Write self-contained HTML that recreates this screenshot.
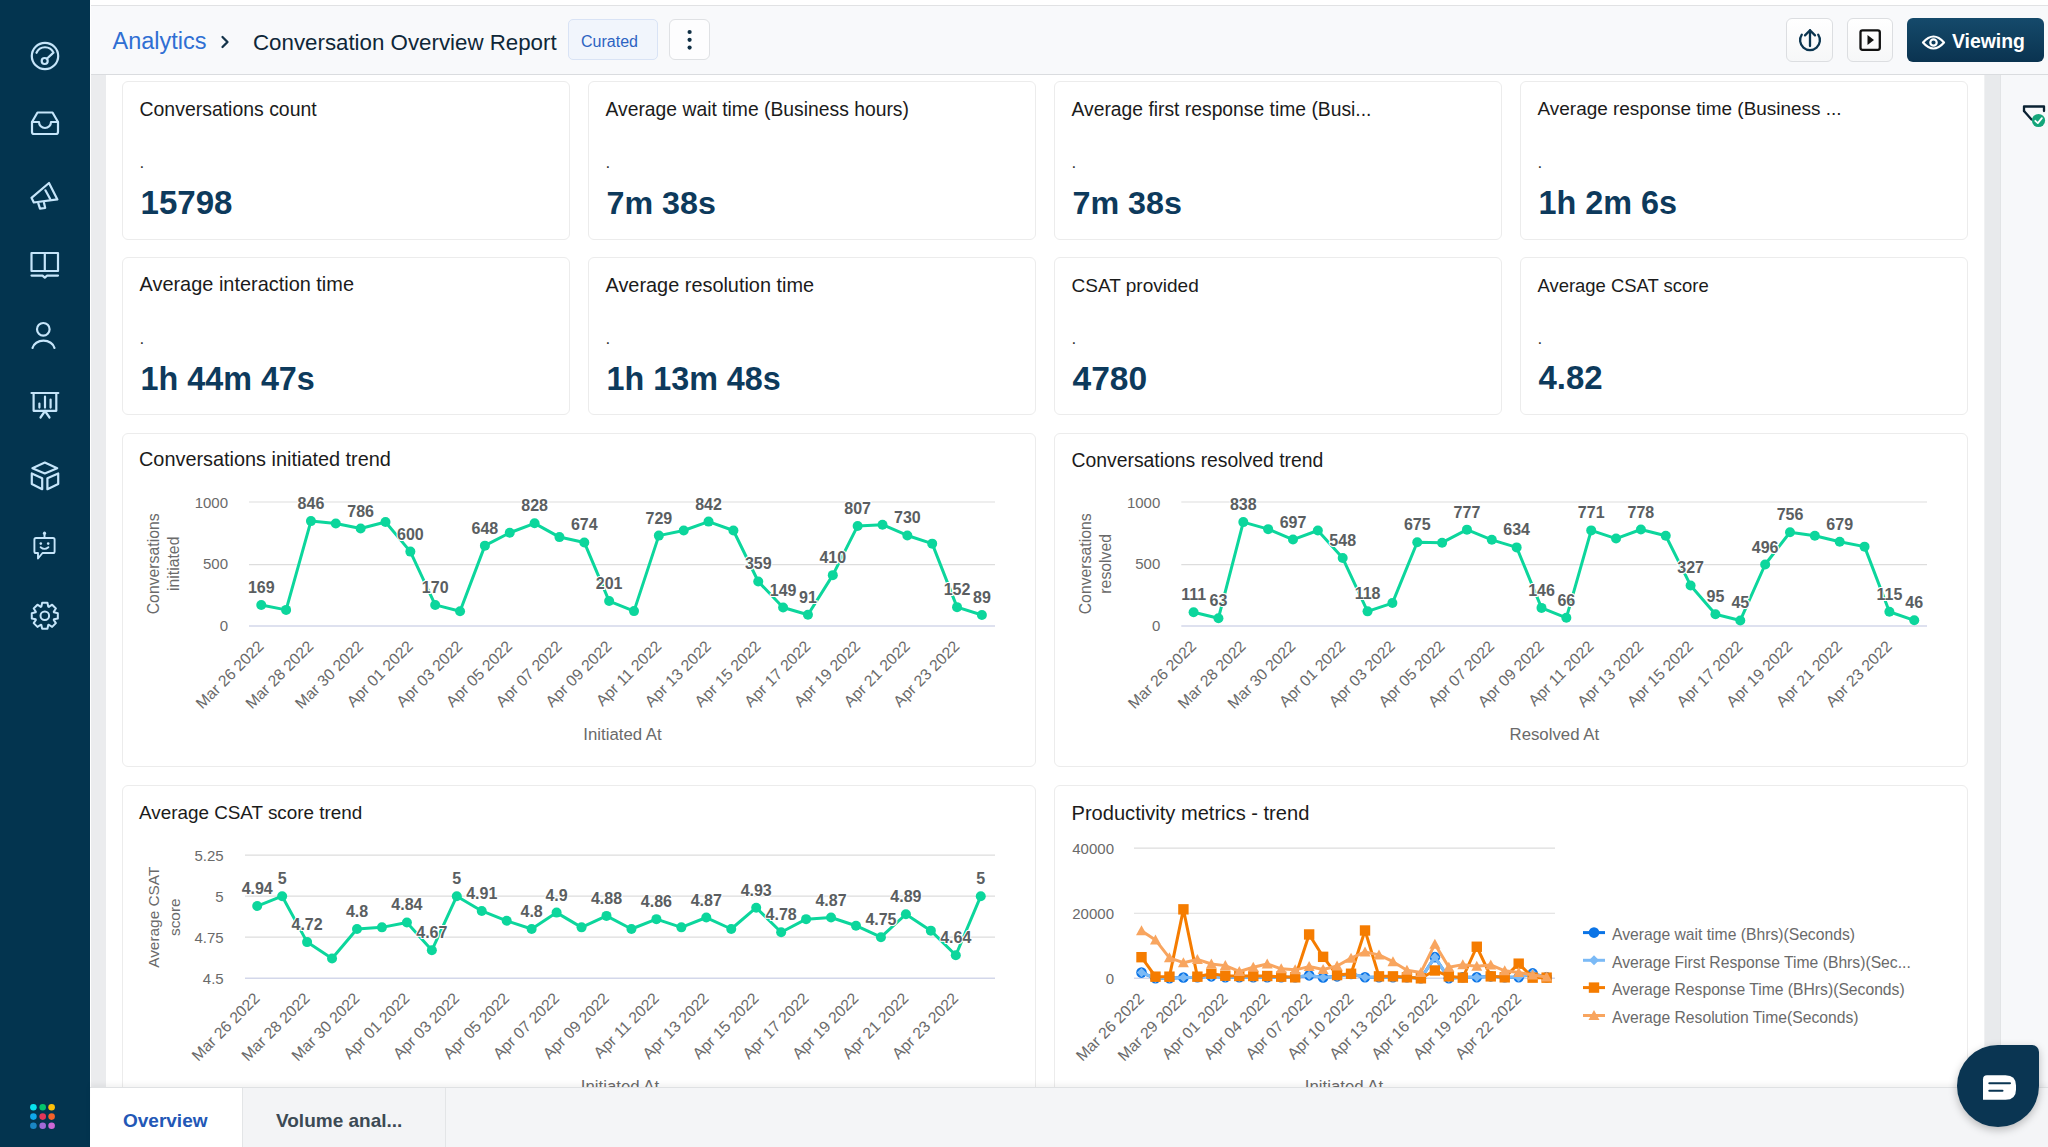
<!DOCTYPE html><html><head><meta charset="utf-8"><title>Conversation Overview Report</title><style>

*{box-sizing:border-box;margin:0;padding:0}
html,body{width:2048px;height:1147px;overflow:hidden;background:#ffffff;font-family:"Liberation Sans",sans-serif;position:relative}
.a{position:absolute}
#sidebar{left:0;top:0;width:90px;height:1147px;background:#03344f}
#topwhite{left:90px;top:0;width:1958px;height:6px;background:#ffffff}
#header{left:91px;top:5px;width:1957px;height:70px;background:#f8f9fb;border-top:1px solid #e1e2e4;border-bottom:1px solid #dadcdf}
.crumb{font-size:23px;color:#2f6fd3;white-space:nowrap;line-height:1}
.title{font-size:22.3px;color:#0f2738;white-space:nowrap;line-height:1}
.badge{left:568px;top:19px;width:90px;height:41px;border:1px solid #d9e3f5;background:#f1f5fc;border-radius:5px}
.badge span{position:absolute;left:12px;top:14px;font-size:16px;color:#2d63c2;line-height:1;white-space:nowrap}
.btn{top:18px;height:44px;border:1px solid #dcdee1;background:linear-gradient(#ffffff,#f6f7f8);border-radius:6px}
#viewing{left:1907px;top:18px;width:137px;height:44px;border-radius:6px;background:linear-gradient(#154a6b,#0a3350)}
#viewing span{position:absolute;left:45px;top:13.5px;font-size:19.4px;font-weight:bold;color:#fff;line-height:1;white-space:nowrap}
#lstrip{left:91px;top:75px;width:15px;height:1013px;background:#ebecee}
#rstrip{left:1984px;top:75px;width:17px;height:1013px;background:#e8eaec;border-left:1px solid #f0f1f2;border-right:1px solid #e2e4e6}
#rpanel{left:2001px;top:75px;width:47px;height:1013px;background:#f7f8fa}
.card{background:#fff;border:1px solid #ececec;border-radius:6px}
.ktitle{font-size:19.5px;color:#1b1b1b;white-space:nowrap;line-height:1}
.kdot{font-size:14px;color:#333;line-height:1}
.kval{font-size:32.6px;font-weight:bold;color:#0d3a5c;white-space:nowrap;line-height:1}
#tabs{left:90px;top:1087px;width:1958px;height:60px;background:#f4f5f7;border-top:1px solid #dfe1e3;box-shadow:0 -3px 5px rgba(0,0,0,0.05)}
#tab1{left:90px;top:1088px;width:152px;height:59px;background:#ffffff}
#tab2{left:242px;top:1088px;width:204px;height:59px;background:#f3f4f6;border-left:1px solid #e3e5e7;border-right:1px solid #e3e5e7}
.tabt{font-size:19px;font-weight:bold;white-space:nowrap;line-height:1}

</style></head><body>
<div id="sidebar" class="a"><svg width="90" height="1147" viewBox="0 0 90 1147" style="position:absolute;left:0;top:0"><g fill="none" stroke="#c6e5fa" stroke-width="2.2" stroke-linecap="round" stroke-linejoin="round"><circle cx="45" cy="56" r="13.2"/><path d="M36.5,52.8 A9.3,9.3 0 0 1 53.5,52.8"/><circle cx="44.7" cy="61" r="3"/><path d="M46.8,58.8 L52.4,53.6"/><path d="M37.5,112.5 L52.5,112.5 L58,122 L58,132 Q58,134 56,134 L34,134 Q32,134 32,132 L32,122 Z"/><path d="M32,122 L39,122 A6,6 0 0 0 51,122 L58,122"/><path d="M31.5,197.8 L49,183 L57.4,199.4 L33.8,202.5 Z"/><path d="M45.4,190.3 L50.2,199"/><path d="M38.3,203.3 L40,208.6 L45.2,208 L44,202.8"/><path d="M31.5,253 L44.8,253 L44.8,271 L31.5,271 Z"/><path d="M44.8,253 L58,253 L58,271 L44.8,271"/><path d="M31.5,275.6 L42.5,275.6 L44.8,277.6 L47.1,275.6 L58,275.6"/><circle cx="43.3" cy="329.3" r="6.3"/><path d="M32.5,348 A11.2,9 0 0 1 54.5,348"/><path d="M31.5,393 L58.3,393"/><path d="M33.6,393 L33.6,410.8 L56.3,410.8 L56.3,393"/><path d="M39.4,403.5 L39.4,407.6 M45,396.5 L45,407.6 M50.6,399.5 L50.6,407.6"/><path d="M45,411 L40.5,417.5 M45,411 L49.5,417.5"/><path d="M44.8,462.6 L57.2,468.2 L44.8,473.4 L32.4,468.2 Z"/><path d="M31.8,473.4 L42.2,478.2 L42.2,489.2 L31.8,484 Z"/><path d="M47.4,478.2 L58.2,473.4 L58.2,484 L47.4,489.2 Z"/><path d="M36,538 L53,538 Q54.6,538 54.6,539.6 L54.6,551.4 Q54.6,553 53,553 L42.5,553 L38,558.5 L38,553 L36,553 Q34.4,553 34.4,551.4 L34.4,539.6 Q34.4,538 36,538 Z" stroke-width="1.9"/><path d="M44.5,538 L44.5,534.5" stroke-width="1.9"/><path d="M40.6,547.2 Q44.5,550.6 48.4,547.2" stroke-width="1.8"/></g><g fill="#c6e5fa"><circle cx="44.5" cy="533.2" r="1.6"/><circle cx="40.8" cy="543.6" r="1.3"/><circle cx="48.2" cy="543.6" r="1.3"/></g><path d="M57.83,613.16 L57.83,618.44 L53.97,619.25 L53.73,619.84 L55.89,623.15 L52.15,626.89 L48.84,624.73 L48.25,624.97 L47.44,628.83 L42.16,628.83 L41.35,624.97 L40.76,624.73 L37.45,626.89 L33.71,623.15 L35.87,619.84 L35.63,619.25 L31.77,618.44 L31.77,613.16 L35.63,612.35 L35.87,611.76 L33.71,608.45 L37.45,604.71 L40.76,606.87 L41.35,606.63 L42.16,602.77 L47.44,602.77 L48.25,606.63 L48.84,606.87 L52.15,604.71 L55.89,608.45 L53.73,611.76 L53.97,612.35 Z" fill="none" stroke="#c6e5fa" stroke-width="2" stroke-linejoin="round"/><circle cx="44.8" cy="615.8" r="4.3" fill="none" stroke="#c6e5fa" stroke-width="2"/><circle cx="33.4" cy="1107.2" r="3.3" fill="#08e3ef"/><circle cx="42.7" cy="1107.2" r="3.3" fill="#06c46c"/><circle cx="51.6" cy="1107.2" r="3.3" fill="#fcc00a"/><circle cx="33.4" cy="1116.6" r="3.3" fill="#10a8ec"/><circle cx="42.7" cy="1116.6" r="3.3" fill="#e43659"/><circle cx="51.6" cy="1116.6" r="3.3" fill="#f4622a"/><circle cx="33.4" cy="1125.7" r="3.3" fill="#1a86c4"/><circle cx="42.7" cy="1125.7" r="3.3" fill="#a06ad6"/><circle cx="51.6" cy="1125.7" r="3.3" fill="#cc68d6"/></svg></div>
<div id="topwhite" class="a"></div>
<div id="header" class="a"></div>
<div class="a crumb" style="left:112.5px;top:30.3px;font-size:23.5px;">Analytics</div>
<div class="a title" style="left:253.0px;top:31.6px;font-size:22.3px;">Conversation Overview Report</div>
<div class="a badge"><span>Curated</span></div>
<div id="viewing" class="a"><span>Viewing</span></div>
<div class="a" style="left:669px;top:19px;width:41px;height:41px;border:1px solid #dfe1e4;background:#fdfdfe;border-radius:6px"></div><svg class="a" style="left:0;top:0" width="2048" height="75" viewBox="0 0 2048 75"><g fill="#0f2f45"><circle cx="689.6" cy="32" r="2.1"/><circle cx="689.6" cy="39.8" r="2.1"/><circle cx="689.6" cy="47.6" r="2.1"/></g><path d="M222.5,37 L227.5,42 L222.5,47" fill="none" stroke="#14334a" stroke-width="2.3" stroke-linecap="round" stroke-linejoin="round"/></svg><div class="a btn" style="left:1786px;width:47px"></div><div class="a btn" style="left:1847px;width:46px"></div><svg class="a" style="left:1770px;top:0" width="278" height="75" viewBox="1770 0 278 75"><path d="M1801.8,34.66 A9.9,9.9 0 1 0 1818.2,34.66" fill="none" stroke="#0b3550" stroke-width="2.3" stroke-linecap="round"/><path d="M1810,46 L1810,30.2 M1805,35.4 L1810,30.2 L1815,35.4" fill="none" stroke="#0b3550" stroke-width="2.3" stroke-linecap="round" stroke-linejoin="round"/><rect x="1860.5" y="30.3" width="19.3" height="19.5" rx="2" fill="none" stroke="#111" stroke-width="2.3"/><path d="M1867.5,35 L1874,40 L1867.5,45 Z" fill="#111"/><path d="M1923,42.5 Q1933.5,30.5 1944,42.5 Q1933.5,54.5 1923,42.5 Z" fill="none" stroke="#fff" stroke-width="2.2" stroke-linejoin="round"/><circle cx="1933.5" cy="42.5" r="3.2" fill="none" stroke="#fff" stroke-width="2.2"/></svg>
<div id="lstrip" class="a"></div>
<div id="rstrip" class="a"></div>
<div id="rpanel" class="a"></div>
<div class="a card" style="left:122px;top:81px;width:448px;height:159px"></div>
<div class="a ktitle" style="left:139.5px;top:99.8px;font-size:19.44px;">Conversations count</div>
<div class="a kdot" style="left:139.5px;top:154.1px;font-size:17px;">.</div>
<div class="a kval" style="left:140.5px;top:186.3px;font-size:33.09px;">15798</div>
<div class="a card" style="left:588px;top:81px;width:448px;height:159px"></div>
<div class="a ktitle" style="left:605.5px;top:99.9px;font-size:19.32px;">Average wait time (Business hours)</div>
<div class="a kdot" style="left:605.5px;top:154.1px;font-size:17px;">.</div>
<div class="a kval" style="left:606.5px;top:187.0px;font-size:32.24px;">7m 38s</div>
<div class="a card" style="left:1054px;top:81px;width:448px;height:159px"></div>
<div class="a ktitle" style="left:1071.5px;top:100.0px;font-size:19.31px;">Average first response time (Busi...</div>
<div class="a kdot" style="left:1071.5px;top:154.1px;font-size:17px;">.</div>
<div class="a kval" style="left:1072.5px;top:187.0px;font-size:32.27px;">7m 38s</div>
<div class="a card" style="left:1520px;top:81px;width:448px;height:159px"></div>
<div class="a ktitle" style="left:1537.5px;top:100.2px;font-size:18.97px;">Average response time (Business ...</div>
<div class="a kdot" style="left:1537.5px;top:154.1px;font-size:17px;">.</div>
<div class="a kval" style="left:1538.5px;top:186.9px;font-size:32.38px;">1h 2m 6s</div>
<div class="a card" style="left:122px;top:257px;width:448px;height:158px"></div>
<div class="a ktitle" style="left:139.5px;top:275.4px;font-size:19.93px;">Average interaction time</div>
<div class="a kdot" style="left:139.5px;top:330.1px;font-size:17px;">.</div>
<div class="a kval" style="left:140.5px;top:362.9px;font-size:32.34px;">1h 44m 47s</div>
<div class="a card" style="left:588px;top:257px;width:448px;height:158px"></div>
<div class="a ktitle" style="left:605.5px;top:275.5px;font-size:19.9px;">Average resolution time</div>
<div class="a kdot" style="left:605.5px;top:330.1px;font-size:17px;">.</div>
<div class="a kval" style="left:606.5px;top:362.9px;font-size:32.32px;">1h 13m 48s</div>
<div class="a card" style="left:1054px;top:257px;width:448px;height:158px"></div>
<div class="a ktitle" style="left:1071.5px;top:276.2px;font-size:19.04px;">CSAT provided</div>
<div class="a kdot" style="left:1071.5px;top:330.1px;font-size:17px;">.</div>
<div class="a kval" style="left:1072.5px;top:361.9px;font-size:33.56px;">4780</div>
<div class="a card" style="left:1520px;top:257px;width:448px;height:158px"></div>
<div class="a ktitle" style="left:1537.5px;top:276.7px;font-size:18.46px;">Average CSAT score</div>
<div class="a kdot" style="left:1537.5px;top:330.1px;font-size:17px;">.</div>
<div class="a kval" style="left:1538.5px;top:362.4px;font-size:32.97px;">4.82</div>
<div class="a card" style="left:122px;top:433px;width:914px;height:334px"></div>
<div class="a card" style="left:1054px;top:433px;width:914px;height:334px"></div>
<div class="a card" style="left:122px;top:785px;width:914px;height:400px"></div>
<div class="a card" style="left:1054px;top:785px;width:914px;height:400px"></div>
<div class="a ktitle" style="left:139.0px;top:450.2px;font-size:19.89px;">Conversations initiated trend</div>
<div class="a ktitle" style="left:1071.5px;top:450.6px;font-size:19.37px;">Conversations resolved trend</div>
<div class="a ktitle" style="left:139.0px;top:804.3px;font-size:18.88px;">Average CSAT score trend</div>
<div class="a ktitle" style="left:1071.5px;top:803.3px;font-size:20.1px;">Productivity metrics - trend</div>
<svg class="a" style="left:0;top:0" width="2048" height="1147" viewBox="0 0 2048 1147" font-family="Liberation Sans, sans-serif"><path d="M249,502.00 L995,502.00" stroke="#dddddd" stroke-width="1.2"/><path d="M249,564.60 L995,564.60" stroke="#dddddd" stroke-width="1.2"/><path d="M249,626.00 L995,626.00" stroke="#d3d7ea" stroke-width="1.6"/><text x="228" y="507.70" text-anchor="end" font-size="15" fill="#6a6a6a">1000</text><text x="228" y="568.80" text-anchor="end" font-size="15" fill="#6a6a6a">500</text><text x="228" y="630.60" text-anchor="end" font-size="15" fill="#6a6a6a">0</text><text x="159.00" y="563.80" text-anchor="middle" transform="rotate(-90 159.00 563.80)" font-size="15.8" fill="#6a6a6a">Conversations</text><text x="179.30" y="563.80" text-anchor="middle" transform="rotate(-90 179.30 563.80)" font-size="15.8" fill="#6a6a6a">initiated</text><path d="M261.25,605.04 L286.10,609.88 L310.95,521.10 L335.80,523.45 L360.65,528.54 L385.50,521.96 L410.35,551.60 L435.20,604.92 L460.05,611.24 L484.90,545.65 L509.75,532.75 L534.60,523.33 L559.45,537.09 L584.30,542.42 L609.15,601.08 L634.00,611.12 L658.85,535.60 L683.70,530.52 L708.55,521.59 L733.40,530.52 L758.25,581.48 L783.10,607.52 L807.95,614.72 L832.80,575.16 L857.65,525.93 L882.50,524.69 L907.35,535.48 L932.20,543.66 L957.05,607.15 L981.90,614.96" fill="none" stroke="#0cd69c" stroke-width="3" stroke-linejoin="round" stroke-linecap="round"/><circle cx="261.25" cy="605.04" r="5" fill="#0cd69c"/><circle cx="286.10" cy="609.88" r="5" fill="#0cd69c"/><circle cx="310.95" cy="521.10" r="5" fill="#0cd69c"/><circle cx="335.80" cy="523.45" r="5" fill="#0cd69c"/><circle cx="360.65" cy="528.54" r="5" fill="#0cd69c"/><circle cx="385.50" cy="521.96" r="5" fill="#0cd69c"/><circle cx="410.35" cy="551.60" r="5" fill="#0cd69c"/><circle cx="435.20" cy="604.92" r="5" fill="#0cd69c"/><circle cx="460.05" cy="611.24" r="5" fill="#0cd69c"/><circle cx="484.90" cy="545.65" r="5" fill="#0cd69c"/><circle cx="509.75" cy="532.75" r="5" fill="#0cd69c"/><circle cx="534.60" cy="523.33" r="5" fill="#0cd69c"/><circle cx="559.45" cy="537.09" r="5" fill="#0cd69c"/><circle cx="584.30" cy="542.42" r="5" fill="#0cd69c"/><circle cx="609.15" cy="601.08" r="5" fill="#0cd69c"/><circle cx="634.00" cy="611.12" r="5" fill="#0cd69c"/><circle cx="658.85" cy="535.60" r="5" fill="#0cd69c"/><circle cx="683.70" cy="530.52" r="5" fill="#0cd69c"/><circle cx="708.55" cy="521.59" r="5" fill="#0cd69c"/><circle cx="733.40" cy="530.52" r="5" fill="#0cd69c"/><circle cx="758.25" cy="581.48" r="5" fill="#0cd69c"/><circle cx="783.10" cy="607.52" r="5" fill="#0cd69c"/><circle cx="807.95" cy="614.72" r="5" fill="#0cd69c"/><circle cx="832.80" cy="575.16" r="5" fill="#0cd69c"/><circle cx="857.65" cy="525.93" r="5" fill="#0cd69c"/><circle cx="882.50" cy="524.69" r="5" fill="#0cd69c"/><circle cx="907.35" cy="535.48" r="5" fill="#0cd69c"/><circle cx="932.20" cy="543.66" r="5" fill="#0cd69c"/><circle cx="957.05" cy="607.15" r="5" fill="#0cd69c"/><circle cx="981.90" cy="614.96" r="5" fill="#0cd69c"/><text x="261.25" y="593.04" text-anchor="middle" font-size="16" font-weight="bold" fill="#5a5e61" stroke="#ffffff" stroke-width="2.2" paint-order="stroke" stroke-linejoin="round">169</text><text x="310.95" y="509.10" text-anchor="middle" font-size="16" font-weight="bold" fill="#5a5e61" stroke="#ffffff" stroke-width="2.2" paint-order="stroke" stroke-linejoin="round">846</text><text x="360.65" y="516.54" text-anchor="middle" font-size="16" font-weight="bold" fill="#5a5e61" stroke="#ffffff" stroke-width="2.2" paint-order="stroke" stroke-linejoin="round">786</text><text x="410.35" y="539.60" text-anchor="middle" font-size="16" font-weight="bold" fill="#5a5e61" stroke="#ffffff" stroke-width="2.2" paint-order="stroke" stroke-linejoin="round">600</text><text x="435.20" y="592.92" text-anchor="middle" font-size="16" font-weight="bold" fill="#5a5e61" stroke="#ffffff" stroke-width="2.2" paint-order="stroke" stroke-linejoin="round">170</text><text x="484.90" y="533.65" text-anchor="middle" font-size="16" font-weight="bold" fill="#5a5e61" stroke="#ffffff" stroke-width="2.2" paint-order="stroke" stroke-linejoin="round">648</text><text x="534.60" y="511.33" text-anchor="middle" font-size="16" font-weight="bold" fill="#5a5e61" stroke="#ffffff" stroke-width="2.2" paint-order="stroke" stroke-linejoin="round">828</text><text x="584.30" y="530.42" text-anchor="middle" font-size="16" font-weight="bold" fill="#5a5e61" stroke="#ffffff" stroke-width="2.2" paint-order="stroke" stroke-linejoin="round">674</text><text x="609.15" y="589.08" text-anchor="middle" font-size="16" font-weight="bold" fill="#5a5e61" stroke="#ffffff" stroke-width="2.2" paint-order="stroke" stroke-linejoin="round">201</text><text x="658.85" y="523.60" text-anchor="middle" font-size="16" font-weight="bold" fill="#5a5e61" stroke="#ffffff" stroke-width="2.2" paint-order="stroke" stroke-linejoin="round">729</text><text x="708.55" y="509.59" text-anchor="middle" font-size="16" font-weight="bold" fill="#5a5e61" stroke="#ffffff" stroke-width="2.2" paint-order="stroke" stroke-linejoin="round">842</text><text x="758.25" y="569.48" text-anchor="middle" font-size="16" font-weight="bold" fill="#5a5e61" stroke="#ffffff" stroke-width="2.2" paint-order="stroke" stroke-linejoin="round">359</text><text x="783.10" y="595.52" text-anchor="middle" font-size="16" font-weight="bold" fill="#5a5e61" stroke="#ffffff" stroke-width="2.2" paint-order="stroke" stroke-linejoin="round">149</text><text x="807.95" y="602.72" text-anchor="middle" font-size="16" font-weight="bold" fill="#5a5e61" stroke="#ffffff" stroke-width="2.2" paint-order="stroke" stroke-linejoin="round">91</text><text x="832.80" y="563.16" text-anchor="middle" font-size="16" font-weight="bold" fill="#5a5e61" stroke="#ffffff" stroke-width="2.2" paint-order="stroke" stroke-linejoin="round">410</text><text x="857.65" y="513.93" text-anchor="middle" font-size="16" font-weight="bold" fill="#5a5e61" stroke="#ffffff" stroke-width="2.2" paint-order="stroke" stroke-linejoin="round">807</text><text x="907.35" y="523.48" text-anchor="middle" font-size="16" font-weight="bold" fill="#5a5e61" stroke="#ffffff" stroke-width="2.2" paint-order="stroke" stroke-linejoin="round">730</text><text x="957.05" y="595.15" text-anchor="middle" font-size="16" font-weight="bold" fill="#5a5e61" stroke="#ffffff" stroke-width="2.2" paint-order="stroke" stroke-linejoin="round">152</text><text x="981.90" y="602.96" text-anchor="middle" font-size="16" font-weight="bold" fill="#5a5e61" stroke="#ffffff" stroke-width="2.2" paint-order="stroke" stroke-linejoin="round">89</text><text x="264.75" y="647.20" text-anchor="end" transform="rotate(-45 264.75 647.20)" font-size="15.75" fill="#6a6a6a">Mar 26 2022</text><text x="314.45" y="647.20" text-anchor="end" transform="rotate(-45 314.45 647.20)" font-size="15.75" fill="#6a6a6a">Mar 28 2022</text><text x="364.15" y="647.20" text-anchor="end" transform="rotate(-45 364.15 647.20)" font-size="15.75" fill="#6a6a6a">Mar 30 2022</text><text x="413.85" y="647.20" text-anchor="end" transform="rotate(-45 413.85 647.20)" font-size="15.75" fill="#6a6a6a">Apr 01 2022</text><text x="463.55" y="647.20" text-anchor="end" transform="rotate(-45 463.55 647.20)" font-size="15.75" fill="#6a6a6a">Apr 03 2022</text><text x="513.25" y="647.20" text-anchor="end" transform="rotate(-45 513.25 647.20)" font-size="15.75" fill="#6a6a6a">Apr 05 2022</text><text x="562.95" y="647.20" text-anchor="end" transform="rotate(-45 562.95 647.20)" font-size="15.75" fill="#6a6a6a">Apr 07 2022</text><text x="612.65" y="647.20" text-anchor="end" transform="rotate(-45 612.65 647.20)" font-size="15.75" fill="#6a6a6a">Apr 09 2022</text><text x="662.35" y="647.20" text-anchor="end" transform="rotate(-45 662.35 647.20)" font-size="15.75" fill="#6a6a6a">Apr 11 2022</text><text x="712.05" y="647.20" text-anchor="end" transform="rotate(-45 712.05 647.20)" font-size="15.75" fill="#6a6a6a">Apr 13 2022</text><text x="761.75" y="647.20" text-anchor="end" transform="rotate(-45 761.75 647.20)" font-size="15.75" fill="#6a6a6a">Apr 15 2022</text><text x="811.45" y="647.20" text-anchor="end" transform="rotate(-45 811.45 647.20)" font-size="15.75" fill="#6a6a6a">Apr 17 2022</text><text x="861.15" y="647.20" text-anchor="end" transform="rotate(-45 861.15 647.20)" font-size="15.75" fill="#6a6a6a">Apr 19 2022</text><text x="910.85" y="647.20" text-anchor="end" transform="rotate(-45 910.85 647.20)" font-size="15.75" fill="#6a6a6a">Apr 21 2022</text><text x="960.55" y="647.20" text-anchor="end" transform="rotate(-45 960.55 647.20)" font-size="15.75" fill="#6a6a6a">Apr 23 2022</text><text x="622.5" y="739.6" text-anchor="middle" font-size="16.8" fill="#6a6a6a">Initiated At</text><path d="M1181.3,502.00 L1927,502.00" stroke="#dddddd" stroke-width="1.2"/><path d="M1181.3,564.60 L1927,564.60" stroke="#dddddd" stroke-width="1.2"/><path d="M1181.3,626.00 L1927,626.00" stroke="#d3d7ea" stroke-width="1.6"/><text x="1160.3" y="507.70" text-anchor="end" font-size="15" fill="#6a6a6a">1000</text><text x="1160.3" y="568.80" text-anchor="end" font-size="15" fill="#6a6a6a">500</text><text x="1160.3" y="630.60" text-anchor="end" font-size="15" fill="#6a6a6a">0</text><text x="1091.00" y="563.80" text-anchor="middle" transform="rotate(-90 1091.00 563.80)" font-size="15.8" fill="#6a6a6a">Conversations</text><text x="1111.50" y="563.80" text-anchor="middle" transform="rotate(-90 1111.50 563.80)" font-size="15.8" fill="#6a6a6a">resolved</text><path d="M1193.60,612.24 L1218.45,618.19 L1243.30,522.09 L1268.15,529.16 L1293.00,539.57 L1317.85,530.52 L1342.70,558.05 L1367.55,611.37 L1392.40,603.06 L1417.25,542.30 L1442.10,542.67 L1466.95,529.65 L1491.80,539.82 L1516.65,547.38 L1541.50,607.90 L1566.35,617.82 L1591.20,530.40 L1616.05,538.58 L1640.90,529.53 L1665.75,535.73 L1690.60,585.45 L1715.45,614.22 L1740.30,620.42 L1765.15,564.50 L1790.00,532.26 L1814.85,535.73 L1839.70,541.80 L1864.55,546.64 L1889.40,611.74 L1914.25,620.30" fill="none" stroke="#0cd69c" stroke-width="3" stroke-linejoin="round" stroke-linecap="round"/><circle cx="1193.60" cy="612.24" r="5" fill="#0cd69c"/><circle cx="1218.45" cy="618.19" r="5" fill="#0cd69c"/><circle cx="1243.30" cy="522.09" r="5" fill="#0cd69c"/><circle cx="1268.15" cy="529.16" r="5" fill="#0cd69c"/><circle cx="1293.00" cy="539.57" r="5" fill="#0cd69c"/><circle cx="1317.85" cy="530.52" r="5" fill="#0cd69c"/><circle cx="1342.70" cy="558.05" r="5" fill="#0cd69c"/><circle cx="1367.55" cy="611.37" r="5" fill="#0cd69c"/><circle cx="1392.40" cy="603.06" r="5" fill="#0cd69c"/><circle cx="1417.25" cy="542.30" r="5" fill="#0cd69c"/><circle cx="1442.10" cy="542.67" r="5" fill="#0cd69c"/><circle cx="1466.95" cy="529.65" r="5" fill="#0cd69c"/><circle cx="1491.80" cy="539.82" r="5" fill="#0cd69c"/><circle cx="1516.65" cy="547.38" r="5" fill="#0cd69c"/><circle cx="1541.50" cy="607.90" r="5" fill="#0cd69c"/><circle cx="1566.35" cy="617.82" r="5" fill="#0cd69c"/><circle cx="1591.20" cy="530.40" r="5" fill="#0cd69c"/><circle cx="1616.05" cy="538.58" r="5" fill="#0cd69c"/><circle cx="1640.90" cy="529.53" r="5" fill="#0cd69c"/><circle cx="1665.75" cy="535.73" r="5" fill="#0cd69c"/><circle cx="1690.60" cy="585.45" r="5" fill="#0cd69c"/><circle cx="1715.45" cy="614.22" r="5" fill="#0cd69c"/><circle cx="1740.30" cy="620.42" r="5" fill="#0cd69c"/><circle cx="1765.15" cy="564.50" r="5" fill="#0cd69c"/><circle cx="1790.00" cy="532.26" r="5" fill="#0cd69c"/><circle cx="1814.85" cy="535.73" r="5" fill="#0cd69c"/><circle cx="1839.70" cy="541.80" r="5" fill="#0cd69c"/><circle cx="1864.55" cy="546.64" r="5" fill="#0cd69c"/><circle cx="1889.40" cy="611.74" r="5" fill="#0cd69c"/><circle cx="1914.25" cy="620.30" r="5" fill="#0cd69c"/><text x="1193.60" y="600.24" text-anchor="middle" font-size="16" font-weight="bold" fill="#5a5e61" stroke="#ffffff" stroke-width="2.2" paint-order="stroke" stroke-linejoin="round">111</text><text x="1218.45" y="606.19" text-anchor="middle" font-size="16" font-weight="bold" fill="#5a5e61" stroke="#ffffff" stroke-width="2.2" paint-order="stroke" stroke-linejoin="round">63</text><text x="1243.30" y="510.09" text-anchor="middle" font-size="16" font-weight="bold" fill="#5a5e61" stroke="#ffffff" stroke-width="2.2" paint-order="stroke" stroke-linejoin="round">838</text><text x="1293.00" y="527.57" text-anchor="middle" font-size="16" font-weight="bold" fill="#5a5e61" stroke="#ffffff" stroke-width="2.2" paint-order="stroke" stroke-linejoin="round">697</text><text x="1342.70" y="546.05" text-anchor="middle" font-size="16" font-weight="bold" fill="#5a5e61" stroke="#ffffff" stroke-width="2.2" paint-order="stroke" stroke-linejoin="round">548</text><text x="1367.55" y="599.37" text-anchor="middle" font-size="16" font-weight="bold" fill="#5a5e61" stroke="#ffffff" stroke-width="2.2" paint-order="stroke" stroke-linejoin="round">118</text><text x="1417.25" y="530.30" text-anchor="middle" font-size="16" font-weight="bold" fill="#5a5e61" stroke="#ffffff" stroke-width="2.2" paint-order="stroke" stroke-linejoin="round">675</text><text x="1466.95" y="517.65" text-anchor="middle" font-size="16" font-weight="bold" fill="#5a5e61" stroke="#ffffff" stroke-width="2.2" paint-order="stroke" stroke-linejoin="round">777</text><text x="1516.65" y="535.38" text-anchor="middle" font-size="16" font-weight="bold" fill="#5a5e61" stroke="#ffffff" stroke-width="2.2" paint-order="stroke" stroke-linejoin="round">634</text><text x="1541.50" y="595.90" text-anchor="middle" font-size="16" font-weight="bold" fill="#5a5e61" stroke="#ffffff" stroke-width="2.2" paint-order="stroke" stroke-linejoin="round">146</text><text x="1566.35" y="605.82" text-anchor="middle" font-size="16" font-weight="bold" fill="#5a5e61" stroke="#ffffff" stroke-width="2.2" paint-order="stroke" stroke-linejoin="round">66</text><text x="1591.20" y="518.40" text-anchor="middle" font-size="16" font-weight="bold" fill="#5a5e61" stroke="#ffffff" stroke-width="2.2" paint-order="stroke" stroke-linejoin="round">771</text><text x="1640.90" y="517.53" text-anchor="middle" font-size="16" font-weight="bold" fill="#5a5e61" stroke="#ffffff" stroke-width="2.2" paint-order="stroke" stroke-linejoin="round">778</text><text x="1690.60" y="573.45" text-anchor="middle" font-size="16" font-weight="bold" fill="#5a5e61" stroke="#ffffff" stroke-width="2.2" paint-order="stroke" stroke-linejoin="round">327</text><text x="1715.45" y="602.22" text-anchor="middle" font-size="16" font-weight="bold" fill="#5a5e61" stroke="#ffffff" stroke-width="2.2" paint-order="stroke" stroke-linejoin="round">95</text><text x="1740.30" y="608.42" text-anchor="middle" font-size="16" font-weight="bold" fill="#5a5e61" stroke="#ffffff" stroke-width="2.2" paint-order="stroke" stroke-linejoin="round">45</text><text x="1765.15" y="552.50" text-anchor="middle" font-size="16" font-weight="bold" fill="#5a5e61" stroke="#ffffff" stroke-width="2.2" paint-order="stroke" stroke-linejoin="round">496</text><text x="1790.00" y="520.26" text-anchor="middle" font-size="16" font-weight="bold" fill="#5a5e61" stroke="#ffffff" stroke-width="2.2" paint-order="stroke" stroke-linejoin="round">756</text><text x="1839.70" y="529.80" text-anchor="middle" font-size="16" font-weight="bold" fill="#5a5e61" stroke="#ffffff" stroke-width="2.2" paint-order="stroke" stroke-linejoin="round">679</text><text x="1889.40" y="599.74" text-anchor="middle" font-size="16" font-weight="bold" fill="#5a5e61" stroke="#ffffff" stroke-width="2.2" paint-order="stroke" stroke-linejoin="round">115</text><text x="1914.25" y="608.30" text-anchor="middle" font-size="16" font-weight="bold" fill="#5a5e61" stroke="#ffffff" stroke-width="2.2" paint-order="stroke" stroke-linejoin="round">46</text><text x="1197.10" y="647.20" text-anchor="end" transform="rotate(-45 1197.10 647.20)" font-size="15.75" fill="#6a6a6a">Mar 26 2022</text><text x="1246.80" y="647.20" text-anchor="end" transform="rotate(-45 1246.80 647.20)" font-size="15.75" fill="#6a6a6a">Mar 28 2022</text><text x="1296.50" y="647.20" text-anchor="end" transform="rotate(-45 1296.50 647.20)" font-size="15.75" fill="#6a6a6a">Mar 30 2022</text><text x="1346.20" y="647.20" text-anchor="end" transform="rotate(-45 1346.20 647.20)" font-size="15.75" fill="#6a6a6a">Apr 01 2022</text><text x="1395.90" y="647.20" text-anchor="end" transform="rotate(-45 1395.90 647.20)" font-size="15.75" fill="#6a6a6a">Apr 03 2022</text><text x="1445.60" y="647.20" text-anchor="end" transform="rotate(-45 1445.60 647.20)" font-size="15.75" fill="#6a6a6a">Apr 05 2022</text><text x="1495.30" y="647.20" text-anchor="end" transform="rotate(-45 1495.30 647.20)" font-size="15.75" fill="#6a6a6a">Apr 07 2022</text><text x="1545.00" y="647.20" text-anchor="end" transform="rotate(-45 1545.00 647.20)" font-size="15.75" fill="#6a6a6a">Apr 09 2022</text><text x="1594.70" y="647.20" text-anchor="end" transform="rotate(-45 1594.70 647.20)" font-size="15.75" fill="#6a6a6a">Apr 11 2022</text><text x="1644.40" y="647.20" text-anchor="end" transform="rotate(-45 1644.40 647.20)" font-size="15.75" fill="#6a6a6a">Apr 13 2022</text><text x="1694.10" y="647.20" text-anchor="end" transform="rotate(-45 1694.10 647.20)" font-size="15.75" fill="#6a6a6a">Apr 15 2022</text><text x="1743.80" y="647.20" text-anchor="end" transform="rotate(-45 1743.80 647.20)" font-size="15.75" fill="#6a6a6a">Apr 17 2022</text><text x="1793.50" y="647.20" text-anchor="end" transform="rotate(-45 1793.50 647.20)" font-size="15.75" fill="#6a6a6a">Apr 19 2022</text><text x="1843.20" y="647.20" text-anchor="end" transform="rotate(-45 1843.20 647.20)" font-size="15.75" fill="#6a6a6a">Apr 21 2022</text><text x="1892.90" y="647.20" text-anchor="end" transform="rotate(-45 1892.90 647.20)" font-size="15.75" fill="#6a6a6a">Apr 23 2022</text><text x="1554.3" y="739.6" text-anchor="middle" font-size="16.8" fill="#6a6a6a">Resolved At</text><path d="M245,855.20 L995,855.20" stroke="#dddddd" stroke-width="1.2"/><path d="M245,896.20 L995,896.20" stroke="#dddddd" stroke-width="1.2"/><path d="M245,937.20 L995,937.20" stroke="#dddddd" stroke-width="1.2"/><path d="M245,978.20 L995,978.20" stroke="#d3d7ea" stroke-width="1.6"/><text x="223.7" y="861.00" text-anchor="end" font-size="15" fill="#6a6a6a">5.25</text><text x="223.7" y="902.00" text-anchor="end" font-size="15" fill="#6a6a6a">5</text><text x="223.7" y="943.00" text-anchor="end" font-size="15" fill="#6a6a6a">4.75</text><text x="223.7" y="984.00" text-anchor="end" font-size="15" fill="#6a6a6a">4.5</text><text x="159.30" y="917.20" text-anchor="middle" transform="rotate(-90 159.30 917.20)" font-size="15.4" fill="#6a6a6a">Average  CSAT</text><text x="180.30" y="917.20" text-anchor="middle" transform="rotate(-90 180.30 917.20)" font-size="15.4" fill="#6a6a6a">score</text><path d="M257.20,906.04 L282.15,896.20 L307.10,942.12 L332.05,958.52 L357.00,929.00 L381.95,927.36 L406.90,922.44 L431.85,950.32 L456.80,896.20 L481.75,910.96 L506.70,920.80 L531.65,929.00 L556.60,912.60 L581.55,927.36 L606.50,915.88 L631.45,929.00 L656.40,919.16 L681.35,927.36 L706.30,917.52 L731.25,929.00 L756.20,907.68 L781.15,932.28 L806.10,919.16 L831.05,917.52 L856.00,925.72 L880.95,937.20 L905.90,914.24 L930.85,930.64 L955.80,955.24 L980.75,896.20" fill="none" stroke="#0cd69c" stroke-width="3" stroke-linejoin="round" stroke-linecap="round"/><circle cx="257.20" cy="906.04" r="5" fill="#0cd69c"/><circle cx="282.15" cy="896.20" r="5" fill="#0cd69c"/><circle cx="307.10" cy="942.12" r="5" fill="#0cd69c"/><circle cx="332.05" cy="958.52" r="5" fill="#0cd69c"/><circle cx="357.00" cy="929.00" r="5" fill="#0cd69c"/><circle cx="381.95" cy="927.36" r="5" fill="#0cd69c"/><circle cx="406.90" cy="922.44" r="5" fill="#0cd69c"/><circle cx="431.85" cy="950.32" r="5" fill="#0cd69c"/><circle cx="456.80" cy="896.20" r="5" fill="#0cd69c"/><circle cx="481.75" cy="910.96" r="5" fill="#0cd69c"/><circle cx="506.70" cy="920.80" r="5" fill="#0cd69c"/><circle cx="531.65" cy="929.00" r="5" fill="#0cd69c"/><circle cx="556.60" cy="912.60" r="5" fill="#0cd69c"/><circle cx="581.55" cy="927.36" r="5" fill="#0cd69c"/><circle cx="606.50" cy="915.88" r="5" fill="#0cd69c"/><circle cx="631.45" cy="929.00" r="5" fill="#0cd69c"/><circle cx="656.40" cy="919.16" r="5" fill="#0cd69c"/><circle cx="681.35" cy="927.36" r="5" fill="#0cd69c"/><circle cx="706.30" cy="917.52" r="5" fill="#0cd69c"/><circle cx="731.25" cy="929.00" r="5" fill="#0cd69c"/><circle cx="756.20" cy="907.68" r="5" fill="#0cd69c"/><circle cx="781.15" cy="932.28" r="5" fill="#0cd69c"/><circle cx="806.10" cy="919.16" r="5" fill="#0cd69c"/><circle cx="831.05" cy="917.52" r="5" fill="#0cd69c"/><circle cx="856.00" cy="925.72" r="5" fill="#0cd69c"/><circle cx="880.95" cy="937.20" r="5" fill="#0cd69c"/><circle cx="905.90" cy="914.24" r="5" fill="#0cd69c"/><circle cx="930.85" cy="930.64" r="5" fill="#0cd69c"/><circle cx="955.80" cy="955.24" r="5" fill="#0cd69c"/><circle cx="980.75" cy="896.20" r="5" fill="#0cd69c"/><text x="257.20" y="894.04" text-anchor="middle" font-size="16" font-weight="bold" fill="#5a5e61" stroke="#ffffff" stroke-width="2.2" paint-order="stroke" stroke-linejoin="round">4.94</text><text x="282.15" y="884.20" text-anchor="middle" font-size="16" font-weight="bold" fill="#5a5e61" stroke="#ffffff" stroke-width="2.2" paint-order="stroke" stroke-linejoin="round">5</text><text x="307.10" y="930.12" text-anchor="middle" font-size="16" font-weight="bold" fill="#5a5e61" stroke="#ffffff" stroke-width="2.2" paint-order="stroke" stroke-linejoin="round">4.72</text><text x="357.00" y="917.00" text-anchor="middle" font-size="16" font-weight="bold" fill="#5a5e61" stroke="#ffffff" stroke-width="2.2" paint-order="stroke" stroke-linejoin="round">4.8</text><text x="406.90" y="910.44" text-anchor="middle" font-size="16" font-weight="bold" fill="#5a5e61" stroke="#ffffff" stroke-width="2.2" paint-order="stroke" stroke-linejoin="round">4.84</text><text x="431.85" y="938.32" text-anchor="middle" font-size="16" font-weight="bold" fill="#5a5e61" stroke="#ffffff" stroke-width="2.2" paint-order="stroke" stroke-linejoin="round">4.67</text><text x="456.80" y="884.20" text-anchor="middle" font-size="16" font-weight="bold" fill="#5a5e61" stroke="#ffffff" stroke-width="2.2" paint-order="stroke" stroke-linejoin="round">5</text><text x="481.75" y="898.96" text-anchor="middle" font-size="16" font-weight="bold" fill="#5a5e61" stroke="#ffffff" stroke-width="2.2" paint-order="stroke" stroke-linejoin="round">4.91</text><text x="531.65" y="917.00" text-anchor="middle" font-size="16" font-weight="bold" fill="#5a5e61" stroke="#ffffff" stroke-width="2.2" paint-order="stroke" stroke-linejoin="round">4.8</text><text x="556.60" y="900.60" text-anchor="middle" font-size="16" font-weight="bold" fill="#5a5e61" stroke="#ffffff" stroke-width="2.2" paint-order="stroke" stroke-linejoin="round">4.9</text><text x="606.50" y="903.88" text-anchor="middle" font-size="16" font-weight="bold" fill="#5a5e61" stroke="#ffffff" stroke-width="2.2" paint-order="stroke" stroke-linejoin="round">4.88</text><text x="656.40" y="907.16" text-anchor="middle" font-size="16" font-weight="bold" fill="#5a5e61" stroke="#ffffff" stroke-width="2.2" paint-order="stroke" stroke-linejoin="round">4.86</text><text x="706.30" y="905.52" text-anchor="middle" font-size="16" font-weight="bold" fill="#5a5e61" stroke="#ffffff" stroke-width="2.2" paint-order="stroke" stroke-linejoin="round">4.87</text><text x="756.20" y="895.68" text-anchor="middle" font-size="16" font-weight="bold" fill="#5a5e61" stroke="#ffffff" stroke-width="2.2" paint-order="stroke" stroke-linejoin="round">4.93</text><text x="781.15" y="920.28" text-anchor="middle" font-size="16" font-weight="bold" fill="#5a5e61" stroke="#ffffff" stroke-width="2.2" paint-order="stroke" stroke-linejoin="round">4.78</text><text x="831.05" y="905.52" text-anchor="middle" font-size="16" font-weight="bold" fill="#5a5e61" stroke="#ffffff" stroke-width="2.2" paint-order="stroke" stroke-linejoin="round">4.87</text><text x="880.95" y="925.20" text-anchor="middle" font-size="16" font-weight="bold" fill="#5a5e61" stroke="#ffffff" stroke-width="2.2" paint-order="stroke" stroke-linejoin="round">4.75</text><text x="905.90" y="902.24" text-anchor="middle" font-size="16" font-weight="bold" fill="#5a5e61" stroke="#ffffff" stroke-width="2.2" paint-order="stroke" stroke-linejoin="round">4.89</text><text x="955.80" y="943.24" text-anchor="middle" font-size="16" font-weight="bold" fill="#5a5e61" stroke="#ffffff" stroke-width="2.2" paint-order="stroke" stroke-linejoin="round">4.64</text><text x="980.75" y="884.20" text-anchor="middle" font-size="16" font-weight="bold" fill="#5a5e61" stroke="#ffffff" stroke-width="2.2" paint-order="stroke" stroke-linejoin="round">5</text><text x="260.70" y="999.40" text-anchor="end" transform="rotate(-45 260.70 999.40)" font-size="15.75" fill="#6a6a6a">Mar 26 2022</text><text x="310.60" y="999.40" text-anchor="end" transform="rotate(-45 310.60 999.40)" font-size="15.75" fill="#6a6a6a">Mar 28 2022</text><text x="360.50" y="999.40" text-anchor="end" transform="rotate(-45 360.50 999.40)" font-size="15.75" fill="#6a6a6a">Mar 30 2022</text><text x="410.40" y="999.40" text-anchor="end" transform="rotate(-45 410.40 999.40)" font-size="15.75" fill="#6a6a6a">Apr 01 2022</text><text x="460.30" y="999.40" text-anchor="end" transform="rotate(-45 460.30 999.40)" font-size="15.75" fill="#6a6a6a">Apr 03 2022</text><text x="510.20" y="999.40" text-anchor="end" transform="rotate(-45 510.20 999.40)" font-size="15.75" fill="#6a6a6a">Apr 05 2022</text><text x="560.10" y="999.40" text-anchor="end" transform="rotate(-45 560.10 999.40)" font-size="15.75" fill="#6a6a6a">Apr 07 2022</text><text x="610.00" y="999.40" text-anchor="end" transform="rotate(-45 610.00 999.40)" font-size="15.75" fill="#6a6a6a">Apr 09 2022</text><text x="659.90" y="999.40" text-anchor="end" transform="rotate(-45 659.90 999.40)" font-size="15.75" fill="#6a6a6a">Apr 11 2022</text><text x="709.80" y="999.40" text-anchor="end" transform="rotate(-45 709.80 999.40)" font-size="15.75" fill="#6a6a6a">Apr 13 2022</text><text x="759.70" y="999.40" text-anchor="end" transform="rotate(-45 759.70 999.40)" font-size="15.75" fill="#6a6a6a">Apr 15 2022</text><text x="809.60" y="999.40" text-anchor="end" transform="rotate(-45 809.60 999.40)" font-size="15.75" fill="#6a6a6a">Apr 17 2022</text><text x="859.50" y="999.40" text-anchor="end" transform="rotate(-45 859.50 999.40)" font-size="15.75" fill="#6a6a6a">Apr 19 2022</text><text x="909.40" y="999.40" text-anchor="end" transform="rotate(-45 909.40 999.40)" font-size="15.75" fill="#6a6a6a">Apr 21 2022</text><text x="959.30" y="999.40" text-anchor="end" transform="rotate(-45 959.30 999.40)" font-size="15.75" fill="#6a6a6a">Apr 23 2022</text><text x="620" y="1091.6" text-anchor="middle" font-size="16.8" fill="#6a6a6a">Initiated At</text><path d="M1134,848.20 L1555,848.20" stroke="#dddddd" stroke-width="1.2"/><path d="M1134,913.25 L1555,913.25" stroke="#dddddd" stroke-width="1.2"/><path d="M1134,978.30 L1555,978.30" stroke="#d3d7ea" stroke-width="1.6"/><text x="1114" y="854.00" text-anchor="end" font-size="15" fill="#6a6a6a">40000</text><text x="1114" y="919.00" text-anchor="end" font-size="15" fill="#6a6a6a">20000</text><text x="1114" y="984.00" text-anchor="end" font-size="15" fill="#6a6a6a">0</text><path d="M1141.50,972.61 L1155.47,978.30 L1169.44,978.30 L1183.41,977.49 L1197.38,977.32 L1211.35,976.35 L1225.32,977.32 L1239.29,977.32 L1253.26,977.32 L1267.23,977.32 L1281.20,977.32 L1295.17,977.32 L1309.14,975.37 L1323.11,977.49 L1337.08,976.35 L1351.05,974.07 L1365.02,977.32 L1378.99,977.32 L1392.96,977.32 L1406.93,977.32 L1420.90,978.30 L1434.87,957.16 L1448.84,978.30 L1462.81,977.32 L1476.78,977.32 L1490.75,976.35 L1504.72,977.32 L1518.69,977.32 L1532.66,973.42 L1546.63,977.32" fill="none" stroke="#0b74e6" stroke-width="3" stroke-linejoin="round"/><circle cx="1141.50" cy="972.61" r="5.3" fill="#0b74e6"/><circle cx="1155.47" cy="978.30" r="5.3" fill="#0b74e6"/><circle cx="1169.44" cy="978.30" r="5.3" fill="#0b74e6"/><circle cx="1183.41" cy="977.49" r="5.3" fill="#0b74e6"/><circle cx="1197.38" cy="977.32" r="5.3" fill="#0b74e6"/><circle cx="1211.35" cy="976.35" r="5.3" fill="#0b74e6"/><circle cx="1225.32" cy="977.32" r="5.3" fill="#0b74e6"/><circle cx="1239.29" cy="977.32" r="5.3" fill="#0b74e6"/><circle cx="1253.26" cy="977.32" r="5.3" fill="#0b74e6"/><circle cx="1267.23" cy="977.32" r="5.3" fill="#0b74e6"/><circle cx="1281.20" cy="977.32" r="5.3" fill="#0b74e6"/><circle cx="1295.17" cy="977.32" r="5.3" fill="#0b74e6"/><circle cx="1309.14" cy="975.37" r="5.3" fill="#0b74e6"/><circle cx="1323.11" cy="977.49" r="5.3" fill="#0b74e6"/><circle cx="1337.08" cy="976.35" r="5.3" fill="#0b74e6"/><circle cx="1351.05" cy="974.07" r="5.3" fill="#0b74e6"/><circle cx="1365.02" cy="977.32" r="5.3" fill="#0b74e6"/><circle cx="1378.99" cy="977.32" r="5.3" fill="#0b74e6"/><circle cx="1392.96" cy="977.32" r="5.3" fill="#0b74e6"/><circle cx="1406.93" cy="977.32" r="5.3" fill="#0b74e6"/><circle cx="1420.90" cy="978.30" r="5.3" fill="#0b74e6"/><circle cx="1434.87" cy="957.16" r="5.3" fill="#0b74e6"/><circle cx="1448.84" cy="978.30" r="5.3" fill="#0b74e6"/><circle cx="1462.81" cy="977.32" r="5.3" fill="#0b74e6"/><circle cx="1476.78" cy="977.32" r="5.3" fill="#0b74e6"/><circle cx="1490.75" cy="976.35" r="5.3" fill="#0b74e6"/><circle cx="1504.72" cy="977.32" r="5.3" fill="#0b74e6"/><circle cx="1518.69" cy="977.32" r="5.3" fill="#0b74e6"/><circle cx="1532.66" cy="973.42" r="5.3" fill="#0b74e6"/><circle cx="1546.63" cy="977.32" r="5.3" fill="#0b74e6"/><path d="M1141.50,972.61 L1155.47,978.30 L1169.44,978.30 L1183.41,977.49 L1197.38,977.32 L1211.35,976.35 L1225.32,977.32 L1239.29,977.32 L1253.26,977.32 L1267.23,977.32 L1281.20,977.32 L1295.17,977.32 L1309.14,975.37 L1323.11,977.49 L1337.08,976.35 L1351.05,974.07 L1365.02,977.32 L1378.99,977.32 L1392.96,977.32 L1406.93,977.32 L1420.90,978.30 L1434.87,957.16 L1448.84,978.30 L1462.81,977.32 L1476.78,977.32 L1490.75,976.35 L1504.72,977.32 L1518.69,977.32 L1532.66,973.42 L1546.63,977.32" fill="none" stroke="#7bbaf6" stroke-width="3" stroke-linejoin="round"/><path d="M1141.50,968.01 L1146.10,972.61 L1141.50,977.21 L1136.90,972.61 Z" fill="#7bbaf6"/><path d="M1155.47,973.70 L1160.07,978.30 L1155.47,982.90 L1150.87,978.30 Z" fill="#7bbaf6"/><path d="M1169.44,973.70 L1174.04,978.30 L1169.44,982.90 L1164.84,978.30 Z" fill="#7bbaf6"/><path d="M1183.41,972.89 L1188.01,977.49 L1183.41,982.09 L1178.81,977.49 Z" fill="#7bbaf6"/><path d="M1197.38,972.72 L1201.98,977.32 L1197.38,981.92 L1192.78,977.32 Z" fill="#7bbaf6"/><path d="M1211.35,971.75 L1215.95,976.35 L1211.35,980.95 L1206.75,976.35 Z" fill="#7bbaf6"/><path d="M1225.32,972.72 L1229.92,977.32 L1225.32,981.92 L1220.72,977.32 Z" fill="#7bbaf6"/><path d="M1239.29,972.72 L1243.89,977.32 L1239.29,981.92 L1234.69,977.32 Z" fill="#7bbaf6"/><path d="M1253.26,972.72 L1257.86,977.32 L1253.26,981.92 L1248.66,977.32 Z" fill="#7bbaf6"/><path d="M1267.23,972.72 L1271.83,977.32 L1267.23,981.92 L1262.63,977.32 Z" fill="#7bbaf6"/><path d="M1281.20,972.72 L1285.80,977.32 L1281.20,981.92 L1276.60,977.32 Z" fill="#7bbaf6"/><path d="M1295.17,972.72 L1299.77,977.32 L1295.17,981.92 L1290.57,977.32 Z" fill="#7bbaf6"/><path d="M1309.14,970.77 L1313.74,975.37 L1309.14,979.97 L1304.54,975.37 Z" fill="#7bbaf6"/><path d="M1323.11,972.89 L1327.71,977.49 L1323.11,982.09 L1318.51,977.49 Z" fill="#7bbaf6"/><path d="M1337.08,971.75 L1341.68,976.35 L1337.08,980.95 L1332.48,976.35 Z" fill="#7bbaf6"/><path d="M1351.05,969.47 L1355.65,974.07 L1351.05,978.67 L1346.45,974.07 Z" fill="#7bbaf6"/><path d="M1365.02,972.72 L1369.62,977.32 L1365.02,981.92 L1360.42,977.32 Z" fill="#7bbaf6"/><path d="M1378.99,972.72 L1383.59,977.32 L1378.99,981.92 L1374.39,977.32 Z" fill="#7bbaf6"/><path d="M1392.96,972.72 L1397.56,977.32 L1392.96,981.92 L1388.36,977.32 Z" fill="#7bbaf6"/><path d="M1406.93,972.72 L1411.53,977.32 L1406.93,981.92 L1402.33,977.32 Z" fill="#7bbaf6"/><path d="M1420.90,973.70 L1425.50,978.30 L1420.90,982.90 L1416.30,978.30 Z" fill="#7bbaf6"/><path d="M1434.87,952.56 L1439.47,957.16 L1434.87,961.76 L1430.27,957.16 Z" fill="#7bbaf6"/><path d="M1448.84,973.70 L1453.44,978.30 L1448.84,982.90 L1444.24,978.30 Z" fill="#7bbaf6"/><path d="M1462.81,972.72 L1467.41,977.32 L1462.81,981.92 L1458.21,977.32 Z" fill="#7bbaf6"/><path d="M1476.78,972.72 L1481.38,977.32 L1476.78,981.92 L1472.18,977.32 Z" fill="#7bbaf6"/><path d="M1490.75,971.75 L1495.35,976.35 L1490.75,980.95 L1486.15,976.35 Z" fill="#7bbaf6"/><path d="M1504.72,972.72 L1509.32,977.32 L1504.72,981.92 L1500.12,977.32 Z" fill="#7bbaf6"/><path d="M1518.69,972.72 L1523.29,977.32 L1518.69,981.92 L1514.09,977.32 Z" fill="#7bbaf6"/><path d="M1532.66,968.82 L1537.26,973.42 L1532.66,978.02 L1528.06,973.42 Z" fill="#7bbaf6"/><path d="M1546.63,972.72 L1551.23,977.32 L1546.63,981.92 L1542.03,977.32 Z" fill="#7bbaf6"/><path d="M1141.50,957.19 L1155.47,976.67 L1169.44,976.67 L1183.41,909.35 L1197.38,976.67 L1211.35,973.75 L1225.32,975.70 L1239.29,976.02 L1253.26,976.02 L1267.23,976.02 L1281.20,976.67 L1295.17,977.32 L1309.14,934.46 L1323.11,956.83 L1337.08,975.05 L1351.05,973.75 L1365.02,930.49 L1378.99,976.35 L1392.96,976.35 L1406.93,977.32 L1420.90,978.30 L1434.87,970.49 L1448.84,976.35 L1462.81,977.65 L1476.78,946.75 L1490.75,976.35 L1504.72,977.32 L1518.69,963.66 L1532.66,977.65 L1546.63,977.65" fill="none" stroke="#f57c00" stroke-width="3" stroke-linejoin="round"/><rect x="1136.30" y="951.99" width="10.4" height="10.4" fill="#f57c00"/><rect x="1150.27" y="971.47" width="10.4" height="10.4" fill="#f57c00"/><rect x="1164.24" y="971.47" width="10.4" height="10.4" fill="#f57c00"/><rect x="1178.21" y="904.15" width="10.4" height="10.4" fill="#f57c00"/><rect x="1192.18" y="971.47" width="10.4" height="10.4" fill="#f57c00"/><rect x="1206.15" y="968.55" width="10.4" height="10.4" fill="#f57c00"/><rect x="1220.12" y="970.50" width="10.4" height="10.4" fill="#f57c00"/><rect x="1234.09" y="970.82" width="10.4" height="10.4" fill="#f57c00"/><rect x="1248.06" y="970.82" width="10.4" height="10.4" fill="#f57c00"/><rect x="1262.03" y="970.82" width="10.4" height="10.4" fill="#f57c00"/><rect x="1276.00" y="971.47" width="10.4" height="10.4" fill="#f57c00"/><rect x="1289.97" y="972.12" width="10.4" height="10.4" fill="#f57c00"/><rect x="1303.94" y="929.26" width="10.4" height="10.4" fill="#f57c00"/><rect x="1317.91" y="951.63" width="10.4" height="10.4" fill="#f57c00"/><rect x="1331.88" y="969.85" width="10.4" height="10.4" fill="#f57c00"/><rect x="1345.85" y="968.55" width="10.4" height="10.4" fill="#f57c00"/><rect x="1359.82" y="925.29" width="10.4" height="10.4" fill="#f57c00"/><rect x="1373.79" y="971.15" width="10.4" height="10.4" fill="#f57c00"/><rect x="1387.76" y="971.15" width="10.4" height="10.4" fill="#f57c00"/><rect x="1401.73" y="972.12" width="10.4" height="10.4" fill="#f57c00"/><rect x="1415.70" y="973.10" width="10.4" height="10.4" fill="#f57c00"/><rect x="1429.67" y="965.29" width="10.4" height="10.4" fill="#f57c00"/><rect x="1443.64" y="971.15" width="10.4" height="10.4" fill="#f57c00"/><rect x="1457.61" y="972.45" width="10.4" height="10.4" fill="#f57c00"/><rect x="1471.58" y="941.55" width="10.4" height="10.4" fill="#f57c00"/><rect x="1485.55" y="971.15" width="10.4" height="10.4" fill="#f57c00"/><rect x="1499.52" y="972.12" width="10.4" height="10.4" fill="#f57c00"/><rect x="1513.49" y="958.46" width="10.4" height="10.4" fill="#f57c00"/><rect x="1527.46" y="972.45" width="10.4" height="10.4" fill="#f57c00"/><rect x="1541.43" y="972.45" width="10.4" height="10.4" fill="#f57c00"/><path d="M1141.50,930.81 L1155.47,939.92 L1169.44,957.81 L1183.41,962.69 L1197.38,959.44 L1211.35,963.99 L1225.32,965.62 L1239.29,971.47 L1253.26,967.24 L1267.23,963.99 L1281.20,968.87 L1295.17,969.84 L1309.14,966.59 L1323.11,969.52 L1337.08,965.94 L1351.05,958.13 L1365.02,951.95 L1378.99,954.88 L1392.96,961.71 L1406.93,970.17 L1420.90,972.45 L1434.87,944.15 L1448.84,967.24 L1462.81,964.64 L1476.78,966.27 L1490.75,964.96 L1504.72,970.82 L1518.69,972.45 L1532.66,975.05 L1546.63,977.00" fill="none" stroke="#f8a55f" stroke-width="3" stroke-linejoin="round"/><path d="M1141.50,925.31 L1147.00,935.31 L1136.00,935.31 Z" fill="#f8a55f"/><path d="M1155.47,934.42 L1160.97,944.42 L1149.97,944.42 Z" fill="#f8a55f"/><path d="M1169.44,952.31 L1174.94,962.31 L1163.94,962.31 Z" fill="#f8a55f"/><path d="M1183.41,957.19 L1188.91,967.19 L1177.91,967.19 Z" fill="#f8a55f"/><path d="M1197.38,953.94 L1202.88,963.94 L1191.88,963.94 Z" fill="#f8a55f"/><path d="M1211.35,958.49 L1216.85,968.49 L1205.85,968.49 Z" fill="#f8a55f"/><path d="M1225.32,960.12 L1230.82,970.12 L1219.82,970.12 Z" fill="#f8a55f"/><path d="M1239.29,965.97 L1244.79,975.97 L1233.79,975.97 Z" fill="#f8a55f"/><path d="M1253.26,961.74 L1258.76,971.74 L1247.76,971.74 Z" fill="#f8a55f"/><path d="M1267.23,958.49 L1272.73,968.49 L1261.73,968.49 Z" fill="#f8a55f"/><path d="M1281.20,963.37 L1286.70,973.37 L1275.70,973.37 Z" fill="#f8a55f"/><path d="M1295.17,964.34 L1300.67,974.34 L1289.67,974.34 Z" fill="#f8a55f"/><path d="M1309.14,961.09 L1314.64,971.09 L1303.64,971.09 Z" fill="#f8a55f"/><path d="M1323.11,964.02 L1328.61,974.02 L1317.61,974.02 Z" fill="#f8a55f"/><path d="M1337.08,960.44 L1342.58,970.44 L1331.58,970.44 Z" fill="#f8a55f"/><path d="M1351.05,952.63 L1356.55,962.63 L1345.55,962.63 Z" fill="#f8a55f"/><path d="M1365.02,946.45 L1370.52,956.45 L1359.52,956.45 Z" fill="#f8a55f"/><path d="M1378.99,949.38 L1384.49,959.38 L1373.49,959.38 Z" fill="#f8a55f"/><path d="M1392.96,956.21 L1398.46,966.21 L1387.46,966.21 Z" fill="#f8a55f"/><path d="M1406.93,964.67 L1412.43,974.67 L1401.43,974.67 Z" fill="#f8a55f"/><path d="M1420.90,966.95 L1426.40,976.95 L1415.40,976.95 Z" fill="#f8a55f"/><path d="M1434.87,938.65 L1440.37,948.65 L1429.37,948.65 Z" fill="#f8a55f"/><path d="M1448.84,961.74 L1454.34,971.74 L1443.34,971.74 Z" fill="#f8a55f"/><path d="M1462.81,959.14 L1468.31,969.14 L1457.31,969.14 Z" fill="#f8a55f"/><path d="M1476.78,960.77 L1482.28,970.77 L1471.28,970.77 Z" fill="#f8a55f"/><path d="M1490.75,959.46 L1496.25,969.46 L1485.25,969.46 Z" fill="#f8a55f"/><path d="M1504.72,965.32 L1510.22,975.32 L1499.22,975.32 Z" fill="#f8a55f"/><path d="M1518.69,966.95 L1524.19,976.95 L1513.19,976.95 Z" fill="#f8a55f"/><path d="M1532.66,969.55 L1538.16,979.55 L1527.16,979.55 Z" fill="#f8a55f"/><path d="M1546.63,971.50 L1552.13,981.50 L1541.13,981.50 Z" fill="#f8a55f"/><text x="1145.00" y="999.50" text-anchor="end" transform="rotate(-45 1145.00 999.50)" font-size="15.75" fill="#6a6a6a">Mar 26 2022</text><text x="1186.91" y="999.50" text-anchor="end" transform="rotate(-45 1186.91 999.50)" font-size="15.75" fill="#6a6a6a">Mar 29 2022</text><text x="1228.82" y="999.50" text-anchor="end" transform="rotate(-45 1228.82 999.50)" font-size="15.75" fill="#6a6a6a">Apr 01 2022</text><text x="1270.73" y="999.50" text-anchor="end" transform="rotate(-45 1270.73 999.50)" font-size="15.75" fill="#6a6a6a">Apr 04 2022</text><text x="1312.64" y="999.50" text-anchor="end" transform="rotate(-45 1312.64 999.50)" font-size="15.75" fill="#6a6a6a">Apr 07 2022</text><text x="1354.55" y="999.50" text-anchor="end" transform="rotate(-45 1354.55 999.50)" font-size="15.75" fill="#6a6a6a">Apr 10 2022</text><text x="1396.46" y="999.50" text-anchor="end" transform="rotate(-45 1396.46 999.50)" font-size="15.75" fill="#6a6a6a">Apr 13 2022</text><text x="1438.37" y="999.50" text-anchor="end" transform="rotate(-45 1438.37 999.50)" font-size="15.75" fill="#6a6a6a">Apr 16 2022</text><text x="1480.28" y="999.50" text-anchor="end" transform="rotate(-45 1480.28 999.50)" font-size="15.75" fill="#6a6a6a">Apr 19 2022</text><text x="1522.19" y="999.50" text-anchor="end" transform="rotate(-45 1522.19 999.50)" font-size="15.75" fill="#6a6a6a">Apr 22 2022</text><text x="1344" y="1091.6" text-anchor="middle" font-size="16.8" fill="#6a6a6a">Initiated At</text><path d="M1583,932.6 L1605,932.6" stroke="#0b74e6" stroke-width="3"/><circle cx="1594" cy="932.6" r="5.3" fill="#0b74e6"/><text x="1612" y="940.30" font-size="15.7" fill="#6a6a6a">Average wait time (Bhrs)(Seconds)</text><path d="M1583,960.3 L1605,960.3" stroke="#7bbaf6" stroke-width="3"/><path d="M1594,955.3 L1599,960.3 L1594,965.3 L1589,960.3 Z" fill="#7bbaf6"/><text x="1612" y="968.00" font-size="15.7" fill="#6a6a6a">Average First Response Time (Bhrs)(Sec...</text><path d="M1583,987.6 L1605,987.6" stroke="#f57c00" stroke-width="3"/><rect x="1588.8" y="982.4" width="10.4" height="10.4" fill="#f57c00"/><text x="1612" y="995.30" font-size="15.7" fill="#6a6a6a">Average Response Time (BHrs)(Seconds)</text><path d="M1583,1015.5 L1605,1015.5" stroke="#f8a55f" stroke-width="3"/><path d="M1594,1010.0 L1599.5,1020.0 L1588.5,1020.0 Z" fill="#f8a55f"/><text x="1612" y="1023.20" font-size="15.7" fill="#6a6a6a">Average Resolution Time(Seconds)</text></svg>
<div id="tabs" class="a"></div>
<div id="tab1" class="a"></div>
<div id="tab2" class="a"></div>
<div class="a tabt" style="left:123.0px;top:1110.5px;font-size:19px;color:#2257b6">Overview</div>
<div class="a tabt" style="left:276.0px;top:1110.5px;font-size:19px;color:#3c4a54">Volume anal...</div>
<svg class="a" style="left:2001px;top:75px" width="47" height="80" viewBox="2001 75 47 80"><path d="M2024,111 L2024,106.5 L2044,106.5 L2044,111" fill="none" stroke="#0b2233" stroke-width="2.3" stroke-linecap="round" stroke-linejoin="round"/><path d="M2024,111 L2031.5,119.5" fill="none" stroke="#0b2233" stroke-width="2.3" stroke-linecap="round"/><circle cx="2038.5" cy="120.5" r="6.6" fill="#14a57a"/><path d="M2035.3,120.8 L2037.8,123.1 L2041.9,118.2" fill="none" stroke="#fff" stroke-width="1.8" stroke-linecap="round" stroke-linejoin="round"/></svg><div class="a" style="left:1957px;top:1045px;width:82px;height:82px;background:#0a3552;border-radius:41px 7px 41px 41px;box-shadow:0 3px 8px rgba(0,0,0,0.25)"></div><svg class="a" style="left:1957px;top:1045px" width="82" height="82" viewBox="0 0 82 82"><path d="M26,34.2 Q26,30.2 30,30.2 L48.5,30.2 Q59,30.2 59,40.5 L59,44.5 Q59,54.8 48.5,54.8 L26,54.8 Z" fill="#fff"/><path d="M32.3,38.3 L53,38.3 M32.3,45.8 L45.5,45.8" stroke="#0a3552" stroke-width="2" stroke-linecap="round"/></svg>
</body></html>
